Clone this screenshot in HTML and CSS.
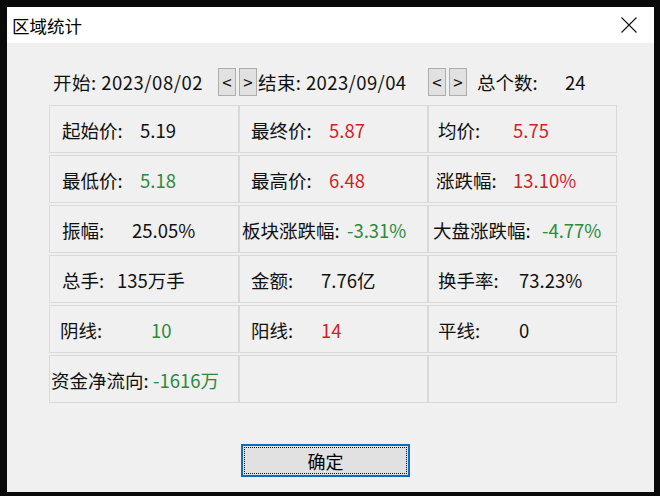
FILE: index.html
```html
<!DOCTYPE html>
<html lang="zh">
<head>
<meta charset="utf-8">
<title>区域统计</title>
<link rel="stylesheet" href="styles.css">
</head>
<body>
<div class="dialog">
  <div class="titlebar">
    <span class="title">区域统计</span>
    <svg class="close" width="16" height="16" viewBox="0 0 16 16"><path d="M0.5 0.5 L15.5 15.5 M15.5 0.5 L0.5 15.5" stroke="#111" stroke-width="1.1" fill="none"/></svg>
  </div>
  <div class="content">
    <div class="header">
      <span class="hstart">开始: 2023/08/02</span>
      <span class="nav">&lt;</span><span class="nav nav2">&gt;</span>
      <span class="hend">结束: 2023/09/04</span>
      <span class="nav">&lt;</span><span class="nav nav2">&gt;</span>
      <span class="hcount">总个数:</span><span class="hnum">24</span>
    </div>
    <div class="grid">
      <div class="cell p13"><span class="lab w78">起始价:</span><span class="val">5.19</span></div>
      <div class="cell p12"><span class="lab w78">最终价:</span><span class="val red">5.87</span></div>
      <div class="cell p10"><span class="lab w75">均价:</span><span class="val red">5.75</span></div>

      <div class="cell p13"><span class="lab w78">最低价:</span><span class="val green">5.18</span></div>
      <div class="cell p12"><span class="lab w78">最高价:</span><span class="val red">6.48</span></div>
      <div class="cell p8"><span class="lab w77">涨跌幅:</span><span class="val red">13.10%</span></div>

      <div class="cell p13"><span class="lab w70">振幅:</span><span class="val">25.05%</span></div>
      <div class="cell p3"><span class="lab w105">板块涨跌幅:</span><span class="val green">-3.31%</span></div>
      <div class="cell p5"><span class="lab w109">大盘涨跌幅:</span><span class="val green">-4.77%</span></div>

      <div class="cell p13"><span class="lab w55">总手:</span><span class="val">135万手</span></div>
      <div class="cell p12"><span class="lab w70">金额:</span><span class="val">7.76亿</span></div>
      <div class="cell p10"><span class="lab w81">换手率:</span><span class="val">73.23%</span></div>

      <div class="cell p11"><span class="lab w91">阴线:</span><span class="val green">10</span></div>
      <div class="cell p12"><span class="lab w70">阳线:</span><span class="val red">14</span></div>
      <div class="cell p10"><span class="lab w81">平线:</span><span class="val">0</span></div>

      <div class="cell p2"><span class="lab w102">资金净流向:</span><span class="val green">-1616万</span></div>
      <div class="cell"></div>
      <div class="cell"></div>
    </div>
    <button class="ok">确定</button>
  </div>
</div>
</body>
</html>
```

FILE: styles.css
```css
html, body {
  margin: 0;
  padding: 0;
  background: #0a0a0a;
}
body {
  width: 660px;
  height: 496px;
  overflow: hidden;
  padding: 7px 0 0 7px;
  box-sizing: border-box;
  font-family: "Noto Sans CJK SC", "Microsoft YaHei", sans-serif;
  color: #111;
}
.dialog {
  width: 647px;
  height: 485px;
  background: #f0f0f0;
  display: flex;
  flex-direction: column;
}
.titlebar {
  height: 36px;
  background: #ffffff;
  display: flex;
  align-items: center;
  justify-content: space-between;
  padding: 0 17px 0 5px;
  flex: none;
}
.title {
  font-size: 17.5px;
  line-height: 20px;
  color: #000;
  margin-top: 1px;
}
.close {
  display: block;
}
.content {
  flex: 1;
  display: flex;
  flex-direction: column;
}
.header {
  margin-top: 25px;
  height: 28px;
  padding-left: 46px;
  display: flex;
  align-items: center;
  font-size: 18.5px;
  line-height: 22px;
}
.hstart {
  width: 165px;
  flex: none;
  white-space: nowrap;
  letter-spacing: 0.5px;
}
.nav {
  width: 18px;
  height: 28px;
  box-sizing: border-box;
  border: 1px solid #adadad;
  background: #e1e1e1;
  display: flex;
  align-items: center;
  justify-content: center;
  font-size: 17px;
  flex: none;
}
.nav2 {
  margin-left: 3px;
}
.hend {
  width: 170px;
  margin-left: 1px;
  flex: none;
  white-space: nowrap;
  letter-spacing: 0.4px;
}
.hcount {
  margin-left: 10px;
  width: 88px;
  flex: none;
}
.grid {
  margin-top: 9px;
  margin-left: 42px;
  display: grid;
  grid-template-columns: 190px 189px 189px;
  grid-auto-rows: 48px;
  row-gap: 2px;
  width: 568px;
}
.cell {
  border: 1px solid #d9d9d9;
  display: flex;
  align-items: center;
  font-size: 18.5px;
  line-height: 22px;
  white-space: nowrap;
  padding-top: 1px;
}
.lab { flex: none; }
.val { color: #111; }
.red { color: #d11f2a; }
.green { color: #2b8a3e; }

.p2 { padding-left: 1px; }
.p3 { padding-left: 2px; }
.p5 { padding-left: 4px; }
.p8 { padding-left: 7px; }
.p10 { padding-left: 9px; }
.p11 { padding-left: 10px; }
.p12 { padding-left: 11px; }
.p13 { padding-left: 12px; }

.w55 { width: 55px; }
.w70 { width: 70px; }
.w75 { width: 75px; }
.w77 { width: 77px; }
.w78 { width: 78px; }
.w81 { width: 81px; }
.w91 { width: 91px; }
.w102 { width: 102px; }
.w105 { width: 105px; }
.w109 { width: 109px; }

.ok {
  position: relative;
  margin: 41px 0 0 234px;
  width: 169px;
  height: 33px;
  box-sizing: border-box;
  border: 2px solid #0a6cc2;
  background: #e1e1e1;
  font-family: "Noto Sans CJK SC", "Microsoft YaHei", sans-serif;
  font-size: 18px;
  line-height: 20px;
  color: #000;
  padding: 0;
}
.ok::after {
  content: "";
  position: absolute;
  left: 1px;
  top: 1px;
  right: 1px;
  bottom: 1px;
  border: 1px dotted #111;
}
```
